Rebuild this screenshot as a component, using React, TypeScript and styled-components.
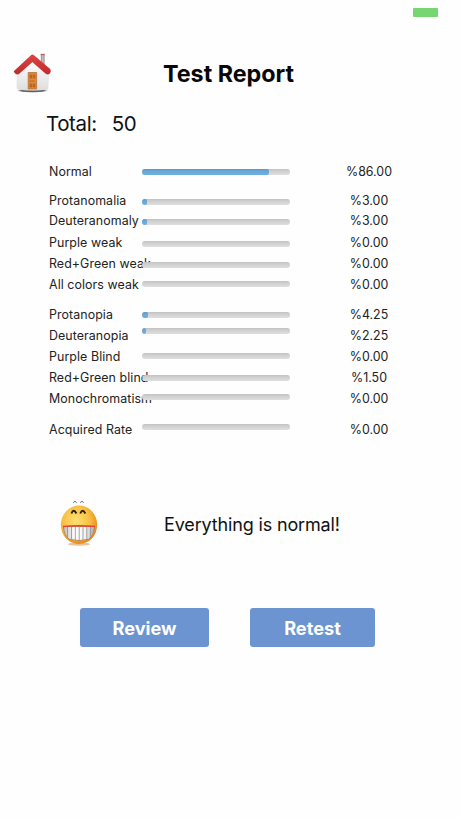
import React from 'react';
import styled, { createGlobalStyle } from 'styled-components';

const GlobalStyle = createGlobalStyle`
  * { box-sizing: border-box; }
  body { margin: 0; background: #fefefe; font-family: Inter, "Liberation Sans", sans-serif; color: #111; }
`;

const Screen = styled.main`
  width: 460px;
  height: 818px;
  overflow: hidden;
  display: flex;
  flex-direction: column;
  background: #fefefe;
`;

const StatusBar = styled.div`
  display: flex;
  justify-content: flex-end;
  height: 48px;
  padding: 8px 22px 0 0;
`;

const Battery = styled.div`
  width: 25px;
  height: 9px;
  border-radius: 1px;
  background: #76d672;
`;

const Header = styled.header`
  display: grid;
  grid-template-columns: 151px auto;
  align-items: center;
  height: 52px;
  padding-left: 12px;
`;

const HomeButton = styled.button`
  display: block;
  width: 40px;
  height: 48px;
  padding: 0;
  border: 0;
  background: none;

  svg { display: block; }
`;

const Title = styled.h1`
  margin: 0;
  font-size: 23.3px;
  line-height: 30px;
  font-weight: 700;
  color: #080808;
`;

const Total = styled.div`
  display: flex;
  height: 62px;
  padding: 9px 0 0 46px;
  gap: 15px;
  font-size: 20.5px;
  line-height: 30px;
  letter-spacing: -0.4px;
`;

const Results = styled.section`
  height: 326px;
  padding-left: 49px;
`;

const Row = styled.div<{ $gap: number }>`
  display: grid;
  grid-template-columns: 93px 148px 158px;
  height: 19px;
  margin-top: ${(p) => p.$gap}px;
`;

const Label = styled.span`
  font-size: 12.4px;
  line-height: 19px;
  letter-spacing: 0.08px;
  white-space: nowrap;
  color: #222;
`;

const Value = styled(Label)`
  text-align: center;
  letter-spacing: 0;
`;

const Track = styled.div<{ $shift: number }>`
  height: 6px;
  margin-top: ${(p) => 6.5 + p.$shift}px;
  border-radius: 3px;
  overflow: hidden;
  background: linear-gradient(#c2c2c2, #d2d2d2 45%, #dedede);
`;

const Fill = styled.div`
  height: 100%;
  border-radius: 0 2px 2px 0;
  background: linear-gradient(#6095c0, #68a9dc 40%, #6cafdf);
`;

const Verdict = styled.section`
  display: grid;
  grid-template-columns: 104px auto;
  align-items: center;
  height: 70px;
  padding-left: 60px;
  margin-top: 2px;
`;

const Message = styled.p`
  margin: 0;
  font-size: 18px;
  line-height: 26px;
  letter-spacing: -0.15px;
  white-space: nowrap;
`;

const Actions = styled.div`
  display: flex;
  gap: 41px;
  margin-top: 48px;
  padding-left: 80px;
`;

const ActionButton = styled.button<{ $width: number }>`
  width: ${(p) => p.$width}px;
  height: 39px;
  padding: 0;
  border: 0;
  border-radius: 3px;
  background: #6c94d1;
  color: #fff;
  font: 700 18.2px Inter, "Liberation Sans", sans-serif;
`;

type Result = { label: string; value: string; fill: number; gap: number; shift: number };

const results: Result[] = [
  { label: 'Normal', value: '86.00', fill: 127, gap: 0, shift: 0 },
  { label: 'Protanomalia', value: '3.00', fill: 4.5, gap: 10, shift: 1.5 },
  { label: 'Deuteranomaly', value: '3.00', fill: 4.5, gap: 1, shift: 1 },
  { label: 'Purple weak', value: '0.00', fill: 0, gap: 3, shift: 1 },
  { label: 'Red+Green weak', value: '0.00', fill: 0, gap: 2, shift: 1 },
  { label: 'All colors weak', value: '0.00', fill: 0, gap: 1.5, shift: 0 },
  { label: 'Protanopia', value: '4.25', fill: 6, gap: 11.5, shift: 0.5 },
  { label: 'Deuteranopia', value: '2.25', fill: 3.5, gap: 2, shift: -4.5 },
  { label: 'Purple Blind', value: '0.00', fill: 0, gap: 2, shift: -0.5 },
  { label: 'Red+Green blind', value: '1.50', fill: 1.2, gap: 2, shift: 0 },
  { label: 'Monochromatism', value: '0.00', fill: 0, gap: 1.5, shift: -1 },
  { label: 'Acquired Rate', value: '0.00', fill: 0, gap: 12.5, shift: -3 },
];

const HomeIcon = () => (
  <svg width="40" height="46" viewBox="0 0 40 46">
    <defs>
      <linearGradient id="roof" x1="0" y1="0" x2="0" y2="1">
        <stop offset="0" stopColor="#dc4440" />
        <stop offset="1" stopColor="#c02c2b" />
      </linearGradient>
      <linearGradient id="wall" x1="0" y1="0" x2="0" y2="1">
        <stop offset="0" stopColor="#fff" />
        <stop offset="1" stopColor="#dedede" />
      </linearGradient>
      <radialGradient id="houseShadow">
        <stop offset="0" stopColor="#333" />
        <stop offset=".7" stopColor="#777" />
        <stop offset="1" stopColor="#fff" stopOpacity="0" />
      </radialGradient>
    </defs>
    <ellipse cx="20.5" cy="39.5" rx="17" ry="2.4" fill="url(#houseShadow)" />
    <path d="M29 3.5h3.5v14H29z" fill="#c4bdb9" />
    <path d="M29.3 3.5v9M32 3.5v13" stroke="#968a86" strokeWidth=".8" />
    <path d="M28.6 3.5h4.2" stroke="#b76461" strokeWidth="1.3" />
    <path d="M5 22 20 8l16.5 15-.5 15q-15 3-31 0z" fill="url(#wall)" stroke="#ddd" strokeWidth=".5" />
    <path d="M5 23 20.3 9.5 36 23" fill="none" stroke="#999" opacity=".35" strokeWidth="3" />
    <path d="M19 4.2q1.3-1.4 3 0L38.2 18q1.5 2.2-.2 4.6-2 1.6-4.5 0L20.4 11 6.6 23.2Q3 24 1.7 20.2Z" fill="url(#roof)" />
    <path d="M16.2 21.5h8.4V38h-8.4z" fill="#dc8735" stroke="#b97237" strokeWidth=".8" />
    <path d="M18 24h1.6v3H18zm3.2 0h1.6v3h-1.6zM18 33h1.6v3H18zm3.2 0h1.6v3h-1.6zM17.5 30h5" fill="#c66d27" stroke="#a95c22" strokeWidth=".6" />
  </svg>
);

const GrinIcon = () => (
  <svg width="40" height="52" viewBox="0 0 40 52">
    <defs>
      <radialGradient id="face" cx=".42" cy=".38" r=".62">
        <stop offset="0" stopColor="#ffe174" />
        <stop offset=".6" stopColor="#f8bf43" />
        <stop offset="1" stopColor="#e88b1c" />
      </radialGradient>
      <linearGradient id="teeth">
        <stop offset="0" stopColor="#bbb" />
        <stop offset=".35" stopColor="#fff" />
        <stop offset=".7" stopColor="#f4f4f4" />
        <stop offset="1" stopColor="#aaa" />
      </linearGradient>
    </defs>
    <ellipse cx="19" cy="45.2" rx="11" ry="1.6" fill="#df9c65" opacity=".65" />
    <ellipse cx="19" cy="25.8" rx="18.2" ry="19.2" fill="url(#face)" />
    <path d="M13.2 3.7q1.7-3 3.5 0M20.2 3.7q1.7-3 3.5 0" fill="none" stroke="#666" strokeWidth="1" />
    <path d="M11.4 14.5q2.2-5.5 5 0M20.3 14.5q2.2-5.5 5 0" fill="none" stroke="#2a210e" strokeWidth="1.9" />
    <path d="M3.4 27.5h31.2q-.3 8-5.6 12.6-10 3-20 0-5.3-4.6-5.6-12.6z" fill="url(#teeth)" stroke="#b97750" strokeWidth=".8" />
    <path d="M3 27.4q16-1.2 32 0" fill="none" stroke="#dc453c" strokeWidth="1.5" />
    <path d="M7.5 28v10.5M11.5 28v12M15.3 28v13.2M19.2 28v13.7M23 28v13.2M26.8 28v12M30.6 28v10.5" stroke="#8d8d8d" strokeWidth=".8" />
  </svg>
);

export default function App() {
  return (
    <Screen>
      <GlobalStyle />
      <StatusBar><Battery /></StatusBar>
      <Header>
        <HomeButton aria-label="Home"><HomeIcon /></HomeButton>
        <Title>Test Report</Title>
      </Header>
      <Total><span>Total:</span><span>50</span></Total>
      <Results>
        {results.map((r) => (
          <Row key={r.label} $gap={r.gap}>
            <Label>{r.label}</Label>
            <Track $shift={r.shift}><Fill style={{ width: r.fill }} /></Track>
            <Value>%{r.value}</Value>
          </Row>
        ))}
      </Results>
      <Verdict>
        <GrinIcon />
        <Message>Everything is normal!</Message>
      </Verdict>
      <Actions>
        <ActionButton $width={129}>Review</ActionButton>
        <ActionButton $width={125}>Retest</ActionButton>
      </Actions>
    </Screen>
  );
}
